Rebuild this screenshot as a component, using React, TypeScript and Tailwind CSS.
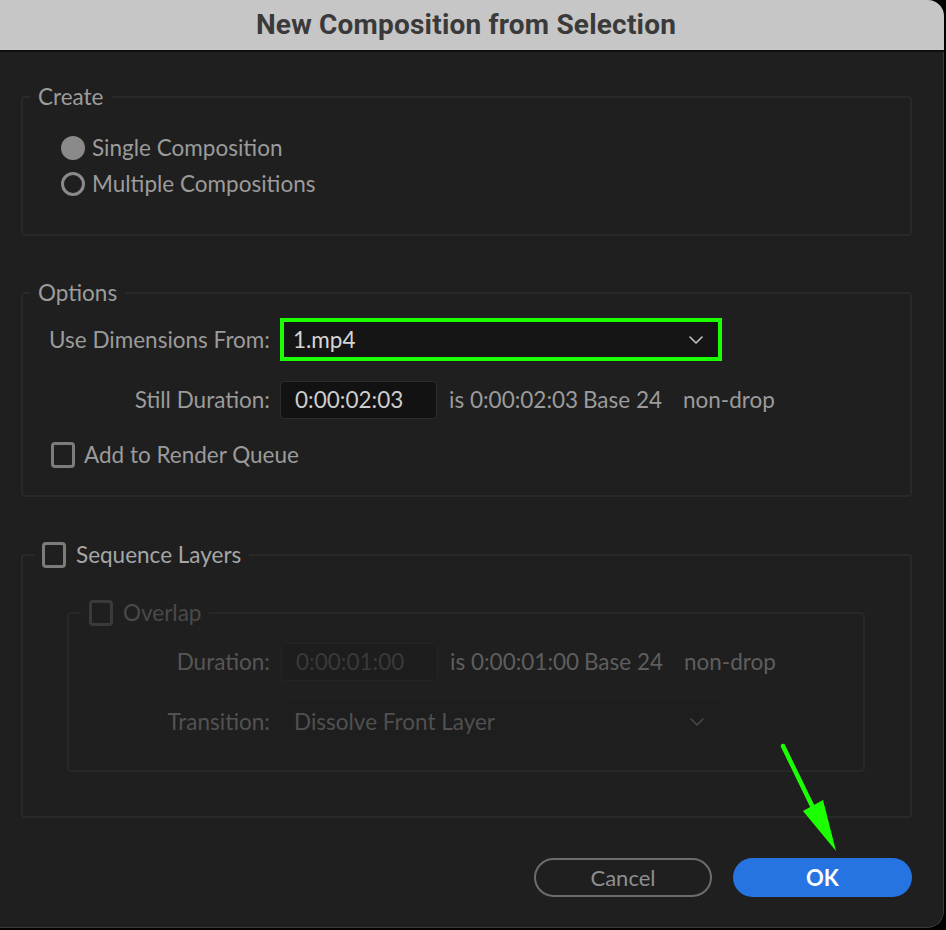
import React from 'react';

const font = { fontFamily: 'Lato, "Open Sans", sans-serif' };

function Chevron({ dim }: { dim?: boolean }) {
  return (
    <svg width="16" height="10" viewBox="0 0 16 10" className="shrink-0">
      <path
        d="M2 2 L8 8 L14 2"
        fill="none"
        stroke={dim ? '#474747' : '#c4c4c4'}
        strokeWidth="1.6"
        strokeLinecap="round"
        strokeLinejoin="round"
      />
    </svg>
  );
}

function Checkbox({ dim }: { dim?: boolean }) {
  return (
    <span
      className={
        dim
          ? 'block w-[24px] h-[26px] rounded-[4px] border-[3px] border-[#3a3a3a] shrink-0'
          : 'block w-[24px] h-[26px] rounded-[4px] border-[3px] border-[#7c7c7c] shrink-0'
      }
    />
  );
}

export default function App() {
  return (
    <div className="w-[946px] h-[930px] bg-black relative overflow-hidden" style={font}>
      <div className="w-[944px] h-[928px] flex flex-col rounded-r-[16px] overflow-hidden">
        {/* title bar */}
        <div className="h-[50px] bg-[#c6c6c6] flex items-center justify-center pr-[12px] border-b-2 border-[#0f0f0f] box-content">
          <span
            className="text-[28px] font-bold text-[#3a3a3a] tracking-[0.2px]"
            style={{ fontFamily: 'Roboto, "Liberation Sans", sans-serif' }}
          >
            New Composition from Selection
          </span>
        </div>

        {/* body */}
        <div className="flex-1 bg-[#1f1f1f] border-b border-r border-[#3a3a3a] rounded-br-[16px] pl-[21px] pr-[31px] pt-[33px] text-[22.5px] leading-[24px] text-[#9b9b9b]">
          {/* Create */}
          <fieldset className="border-2 border-[#292929] rounded-[4px]">
            <legend className="ml-[7px] px-[8px] h-[24px] text-[#9c9c9c]">Create</legend>
            <div className="pl-[38px] pt-[21px] pb-[32px]">
              <div className="h-[36px] flex items-center gap-[7px]">
                <span className="block w-[24px] h-[24px] rounded-full bg-[#8a8a8a]" />
                <span>Single Composition</span>
              </div>
              <div className="h-[36px] flex items-center gap-[7px]">
                <span className="block w-[24px] h-[24px] rounded-full border-[3px] border-[#8a8a8a]" />
                <span>Multiple Compositions</span>
              </div>
            </div>
          </fieldset>

          {/* Options */}
          <fieldset className="mt-[45px] border-2 border-[#292929] rounded-[4px]">
            <legend className="ml-[7px] px-[8px] h-[24px] text-[#9c9c9c]">Options</legend>
            <div className="pl-[26px] pt-[13px] pb-[27px]">
              <div className="flex items-center h-[43px]">
                <span className="w-[221px] text-right shrink-0">Use Dimensions From:</span>
                <div className="ml-[10px] w-[442px] h-[43px] border-[4px] border-[#1cff00] bg-[#151515] flex items-center justify-between pl-[9px] pr-[14px]">
                  <span className="text-[#d6d6d6]">1.mp4</span>
                  <Chevron />
                </div>
              </div>
              <div className="flex items-center h-[38px] mt-[20px]">
                <span className="w-[221px] text-right shrink-0">Still Duration:</span>
                <div className="ml-[10px] w-[157px] h-[38px] bg-[#121212] border border-[#2d2d2d] rounded-[4px] flex items-center pl-[14px] text-[#cdcdcd]">
                  0:00:02:03
                </div>
                <span className="ml-[12px] w-[134px] shrink-0">is 0:00:02:03</span>
                <span className="w-[100px] shrink-0">Base 24</span>
                <span>non-drop</span>
              </div>
              <div className="flex items-center h-[26px] mt-[23px] gap-[9px] pl-[2px]">
                <Checkbox />
                <span>Add to Render Queue</span>
              </div>
            </div>
          </fieldset>

          {/* Sequence Layers */}
          <fieldset className="mt-[43px] border-2 border-[#292929] rounded-[4px]">
            <legend className="ml-[11px] px-[8px] h-[30px] flex items-center gap-[10px] text-[#a6a6a6]">
              <Checkbox />
              <span>Sequence Layers</span>
            </legend>
            <div className="pl-[44px] pr-[45px] pt-[28px] pb-[44px]">
              <fieldset className="border-2 border-[#272727] rounded-[4px]">
                <legend className="ml-[12px] px-[8px] h-[30px] flex items-center gap-[10px] text-[#4a4a4a]">
                  <Checkbox dim />
                  <span>Overlap</span>
                </legend>
                <div className="pt-[15px] pb-[27px]">
                  <div className="flex items-center h-[38px]">
                    <span className="w-[201px] text-right shrink-0 text-[#565656]">Duration:</span>
                    <div className="ml-[11px] w-[157px] h-[38px] bg-[#1d1d1d] border border-[#242424] rounded-[4px] flex items-center pl-[14px] text-[#393939]">
                      0:00:01:00
                    </div>
                    <span className="ml-[12px] w-[134px] shrink-0 text-[#5e5e5e]">is 0:00:01:00</span>
                    <span className="w-[100px] shrink-0 text-[#5e5e5e]">Base 24</span>
                    <span className="text-[#5e5e5e]">non-drop</span>
                  </div>
                  <div className="flex items-center h-[43px] mt-[19px]">
                    <span className="w-[201px] text-right shrink-0 text-[#525252]">Transition:</span>
                    <div className="ml-[11px] w-[442px] h-[43px] bg-[#1e1e1e] flex items-center justify-between pl-[13px] pr-[18px] text-[#505050]">
                      <span>Dissolve Front Layer</span>
                      <Chevron dim />
                    </div>
                  </div>
                </div>
              </fieldset>
            </div>
          </fieldset>

          {/* buttons */}
          <div className="mt-[40px] flex justify-end gap-[21px]">
            <button className="w-[178px] h-[39px] rounded-full border-2 border-[#6c6c6c] text-[#8e8e8e] text-[22px] flex items-center justify-center">
              Cancel
            </button>
            <button className="w-[179px] h-[39px] rounded-full bg-[#2673e2] text-white font-bold text-[22px] flex items-center justify-center">
              OK
            </button>
          </div>
        </div>
      </div>

      {/* annotation arrow */}
      <svg className="absolute inset-0 pointer-events-none" width="946" height="930">
        <line x1="783" y1="746" x2="818" y2="818" stroke="#1cff00" strokeWidth="4.5" strokeLinecap="round" />
        <polygon points="803,811 823,800 836,851" fill="#1cff00" />
      </svg>
    </div>
  );
}
